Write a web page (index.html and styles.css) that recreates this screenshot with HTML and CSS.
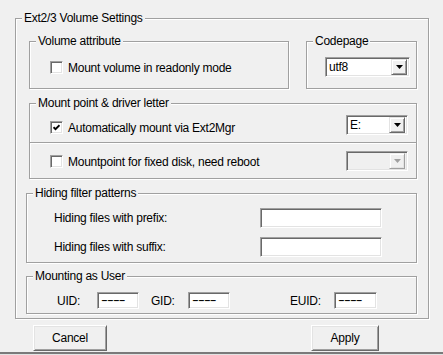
FILE: index.html
```html
<!DOCTYPE html>
<html lang="en">
<head>
  <meta charset="UTF-8">
  <title>Ext2/3 Volume Settings</title>
  <link rel="stylesheet" href="styles.css">
</head>
<body>

  <div class="dialog">
    <fieldset class="group outer">
      <legend>Ext2/3 Volume Settings</legend>
      <div class="outer-body">

        <!-- Volume attribute + codepage -->
        <div class="top-row">
          <fieldset class="group volume">
            <legend>Volume attribute</legend>
            <label class="check-row">
              <span class="checkbox"></span>
              Mount volume in readonly mode
            </label>
          </fieldset>
          <fieldset class="group codepage">
            <legend>Codepage</legend>
            <div class="combo codepage-combo">
              <span class="combo-value">utf8</span>
              <span class="combo-btn">
                <svg width="7" height="4" viewBox="0 0 7 4"><path d="M0 0H7L3.5 4Z" fill="#000"/></svg>
              </span>
            </div>
          </fieldset>
        </div>

        <!-- Mount point -->
        <fieldset class="group mount">
          <legend>Mount point &amp; driver letter</legend>
          <div class="mount-row first">
            <label class="check-row">
              <span class="checkbox checked">
                <svg width="7" height="7" viewBox="0 0 7 7"><path d="M0.5 3.2L2.5 5.2L6.5 1.2" fill="none" stroke="#000" stroke-width="1.9"/></svg>
              </span>
              Automatically mount via Ext2Mgr
            </label>
            <div class="combo drive-combo">
              <span class="combo-value">E:</span>
              <span class="combo-btn">
                <svg width="7" height="4" viewBox="0 0 7 4"><path d="M0 0H7L3.5 4Z" fill="#000"/></svg>
              </span>
            </div>
          </div>
          <div class="divider"></div>
          <div class="mount-row second">
            <label class="check-row">
              <span class="checkbox"></span>
              Mountpoint for fixed disk, need reboot
            </label>
            <div class="combo drive-combo disabled">
              <span class="combo-value"></span>
              <span class="combo-btn">
                <svg width="7" height="4" viewBox="0 0 7 4"><path d="M0 0H7L3.5 4Z" fill="#a0a0a0"/></svg>
              </span>
            </div>
          </div>
        </fieldset>

        <!-- Hiding filters -->
        <fieldset class="group hiding">
          <legend>Hiding filter patterns</legend>
          <div class="filter-row">
            <span>Hiding files with prefix:</span>
            <span class="edit filter-edit"></span>
          </div>
          <div class="filter-row">
            <span>Hiding files with suffix:</span>
            <span class="edit filter-edit"></span>
          </div>
        </fieldset>

        <!-- User ids -->
        <fieldset class="group user">
          <legend>Mounting as User</legend>
          <div class="user-row">
            <span class="id-label uid">UID:</span>
            <span class="edit id-edit"><span class="dashes">----</span></span>
            <span class="id-label gid">GID:</span>
            <span class="edit id-edit"><span class="dashes">----</span></span>
            <span class="id-label euid">EUID:</span>
            <span class="edit id-edit wide"><span class="dashes">----</span></span>
          </div>
        </fieldset>

      </div>
    </fieldset>

    <div class="buttons">
      <button class="btn cancel">Cancel</button>
      <button class="btn apply">Apply</button>
    </div>
  </div>
  <div class="window-edge"></div>

</body>
</html>
```

FILE: styles.css
```css
html, body {
  margin: 0;
  padding: 0;
  width: 443px;
  height: 355px;
  overflow: hidden;
  background: #f0f0f0;
  font-family: 'Liberation Sans', Arial, sans-serif;
  font-size: 12px;
  letter-spacing: -0.25px;
  color: #000;
}

.dialog {
  box-sizing: border-box;
  height: 352px;
  padding: 11px 0 0 15px;
}

.window-edge {
  height: 2px;
  background: #7a7a7a;
  border-bottom: 1px solid #e3e3e3;
}

/* etched group boxes */
.group {
  box-sizing: border-box;
  margin: 0;
  padding: 0;
  min-width: 0;
  border: 1px solid #a0a0a0;
  box-shadow: inset 1px 1px 0 #fff, 1px 1px 0 #fff;
}

.group legend {
  margin-left: 6px;
  padding: 0 2px;
  line-height: 15px;
  background: #f0f0f0;
}

.outer {
  width: 414px;
  height: 308px;
}

.outer-body {
  padding: 8px 11px 0 10px;
}

.top-row {
  display: flex;
  margin-left: 3px;
}

.volume {
  width: 260px;
  height: 55px;
}

.codepage {
  width: 111px;
  height: 55px;
  margin-left: 17px;
}

/* checkbox */
.check-row {
  display: flex;
  align-items: center;
  height: 15px;
  gap: 5px;
}

.volume .check-row {
  margin: 11px 0 0 20px;
}

.checkbox {
  box-sizing: border-box;
  width: 13px;
  height: 13px;
  background: #fff;
  border: 1px solid;
  border-color: #a0a0a0 #fff #fff #a0a0a0;
  box-shadow: inset 1px 1px 0 #696969, inset -1px -1px 0 #e3e3e3;
  display: flex;
  align-items: center;
  justify-content: center;
}

/* combo boxes and edits */
.combo, .edit {
  box-sizing: border-box;
  background: #fff;
  border: 1px solid;
  border-color: #a0a0a0 #fff #fff #a0a0a0;
  box-shadow: inset 1px 1px 0 #696969, inset -1px -1px 0 #e3e3e3;
}

.combo {
  display: flex;
  align-items: center;
  height: 20px;
  padding: 2px;
}

.combo-value {
  flex: 1;
  padding-left: 1px;
  line-height: 16px;
}

.combo-btn {
  box-sizing: border-box;
  width: 16px;
  height: 16px;
  background: #f0f0f0;
  border: 1px solid;
  border-color: #e3e3e3 #696969 #696969 #e3e3e3;
  box-shadow: inset 1px 1px 0 #fff, inset -1px -1px 0 #a0a0a0;
  display: flex;
  align-items: center;
  justify-content: center;
}

.codepage-combo {
  width: 85px;
  margin: 8px 0 0 18px;
}

.drive-combo {
  width: 62px;
  margin-right: 8px;
}

.combo.disabled {
  background: #f0f0f0;
}

.combo.disabled .combo-btn {
  border-color: #f0f0f0 #a0a0a0 #a0a0a0 #f0f0f0;
  box-shadow: inset 1px 1px 0 #fff, inset -1px -1px 0 #e3e3e3;
}

/* mount point */
.mount {
  width: 388px;
  height: 83px;
  margin: 7px 0 0 3px;
}

.mount-row {
  display: flex;
  align-items: flex-start;
  justify-content: space-between;
  padding-left: 20px;
}

.mount-row.first {
  height: 31px;
}

.mount-row.first .check-row { margin-top: 9px; }
.mount-row.first .combo { margin-top: 4px; }

.mount-row.second .check-row { margin-top: 10px; }
.mount-row.second .combo { margin-top: 7px; }

.divider {
  border-top: 1px solid #a0a0a0;
  border-bottom: 1px solid #fff;
}

/* hiding filters */
.hiding {
  width: 391px;
  height: 77px;
  margin-top: 7px;
  padding-top: 7px;
}

.filter-row {
  display: grid;
  grid-template-columns: 206px 122px;
  align-items: center;
  padding-left: 27px;
  height: 20px;
  margin-bottom: 9px;
}

.filter-edit {
  height: 20px;
}

/* user ids */
.user {
  width: 391px;
  height: 45px;
  margin-top: 6px;
}

.user-row {
  display: flex;
  align-items: center;
  margin-top: 8px;
  padding-left: 30px;
}

.id-label { width: 40px; }
.id-label.gid { width: 37px; margin-left: 12px; }
.id-label.euid { width: 44px; margin-left: 60px; }

.id-edit {
  width: 42px;
  height: 17px;
  line-height: 14px;
  padding-left: 3px;
}

.id-edit.wide { width: 43px; }

.dashes {
  display: inline-block;
  letter-spacing: -0.5px;
  transform: scaleX(1.7);
  transform-origin: left center;
}

/* buttons */
.buttons {
  display: flex;
  justify-content: space-between;
  margin-top: 6px;
  padding: 0 64px 0 18px;
}

.btn {
  box-sizing: border-box;
  height: 26px;
  padding: 0;
  font: inherit;
  letter-spacing: inherit;
  color: #000;
  background: #f0f0f0;
  border: 1px solid;
  border-color: #fff #696969 #696969 #fff;
  box-shadow: inset 1px 1px 0 #e3e3e3, inset -1px -1px 0 #a0a0a0;
}

.cancel { width: 74px; }
.apply { width: 68px; }
```
